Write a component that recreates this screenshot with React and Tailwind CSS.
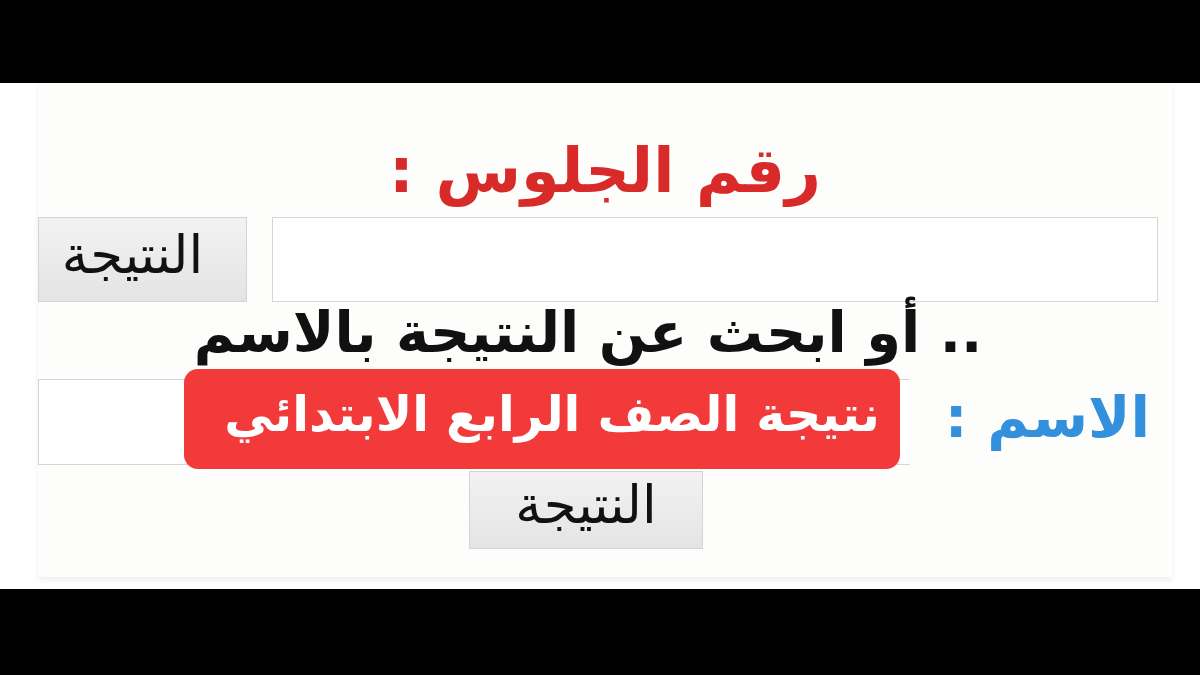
export default function App() {
  return (
    <div className="w-[1200px] h-[675px] bg-black flex flex-col font-['DejaVu_Sans',sans-serif]">
      <div className="h-[83px] shrink-0" />
      <div className="h-[506px] shrink-0 bg-white flex flex-col">
        <div
          dir="rtl"
          className="ml-[38px] mr-[28px] h-[494px] bg-[#fdfdfc] shadow-[0_3px_6px_rgba(0,0,0,0.07)] flex flex-col"
        >
          {/* seat number */}
          <h1 className="mt-[58px] h-[60px] text-center text-[62px] leading-[60px] font-bold text-[#d92a2a]">
            رقم الجلوس :
          </h1>
          <div className="mt-[16px] mr-[14px] flex items-stretch gap-[25px] h-[85px]">
            <div className="flex-1 bg-white border border-[#d6d6d6]" />
            <button className="w-[209px] bg-gradient-to-b from-[#f2f2f2] to-[#e4e4e4] border border-[#d4d4d4] text-[53px] leading-[60px] text-[#111] pb-[10px] pr-[20px]">
              النتيجة
            </button>
          </div>

          {/* search by name */}
          <p className="mt-[8px] ml-[0px] mr-[34px] h-[46px] whitespace-nowrap text-center text-[56px] leading-[46px] font-bold text-[#111]">
            .. أو ابحث عن النتيجة بالاسم
          </p>
          <div className="mt-[23px] mr-[22px] flex items-center gap-[30px] h-[86px]">
            <span className="w-[210px] shrink-0 whitespace-nowrap text-[57px] leading-[70px] font-bold text-[#3390dc] pb-[10px]">
              الاسم :
            </span>
            <div className="relative flex-1 h-full bg-white border-y border-l border-[#d6d6d6]">
              <div className="absolute left-[145px] right-[10px] -top-[11px] -bottom-[5px] rounded-[14px] bg-[#f23a3a] flex items-center justify-center pb-[8px] pl-[20px]">
                <span className="whitespace-nowrap text-[49px] leading-[60px] font-bold text-white">نتيجة الصف الرابع الابتدائي</span>
              </div>
            </div>
          </div>
          <div className="flex justify-center ml-[-38px]">
            <button className="mt-[6px] w-[234px] h-[78px] bg-gradient-to-b from-[#f2f2f2] to-[#e4e4e4] border border-[#d4d4d4] text-[53px] leading-[60px] text-[#111] pb-[10px]">
              النتيجة
            </button>
          </div>
        </div>
      </div>
    </div>
  );
}
